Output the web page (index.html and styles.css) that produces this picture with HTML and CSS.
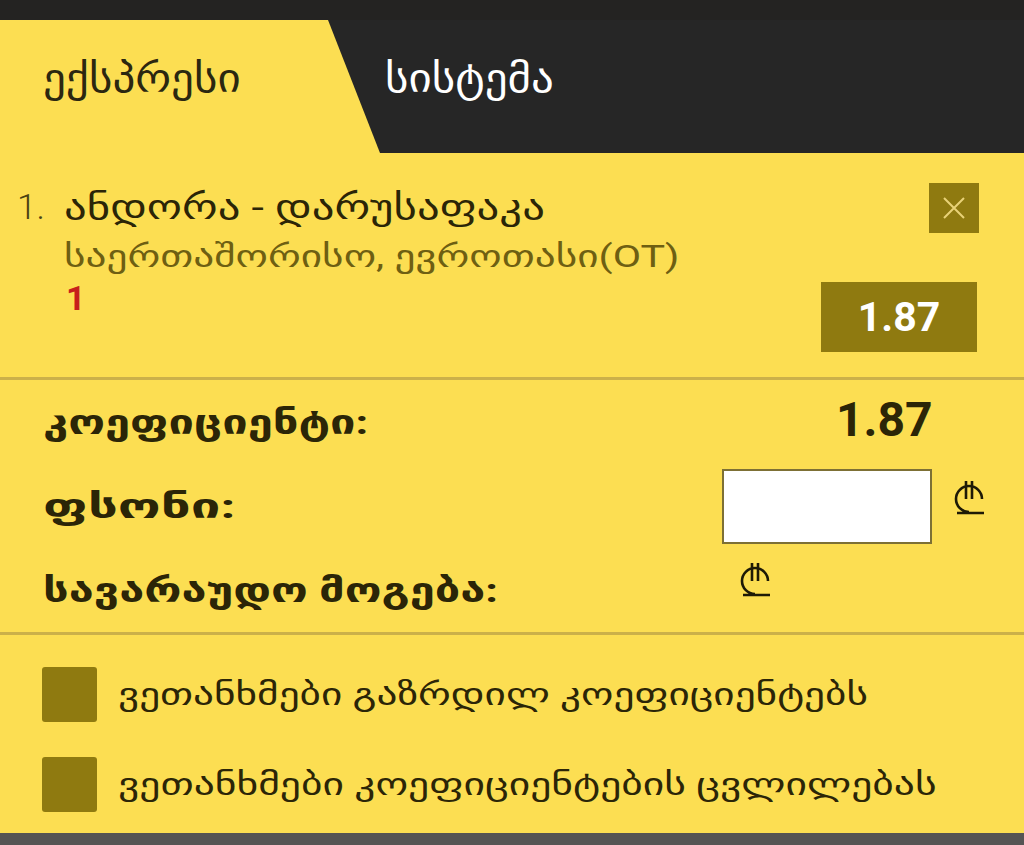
FILE: index.html
```html
<!DOCTYPE html>
<html lang="ka">
<head>
<meta charset="utf-8">
<link rel="stylesheet" href="styles.css">
</head>
<body>
<div class="topbar"></div>
<div class="tabs">
  <div class="tab tab-express"><span class="wide-tab">ექსპრესი</span></div>
  <div class="tab tab-system"><span class="wide-tab">სისტემა</span></div>
</div>
<div class="bet">
  <div class="bet-num">1.</div>
  <div class="bet-info">
    <div class="bet-title"><span class="wide-title">ანდორა - დარუსაფაკა</span></div>
    <div class="bet-league"><span class="wide">საერთაშორისო, ევროთასი(OT)</span></div>
    <div class="bet-pick">1</div>
  </div>
  <div class="bet-side">
    <button class="close-btn" aria-label="close">
      <svg width="24" height="24" viewBox="0 0 24 24"><path d="M2 2L22 22M22 2L2 22" stroke="#e9d277" stroke-width="2" fill="none"/></svg>
    </button>
    <div class="odd-box">1.87</div>
  </div>
</div>
<div class="summary">
  <div class="row">
    <div class="label"><span class="wide">კოეფიციენტი:</span></div>
    <div class="right right-value">1.87</div>
  </div>
  <div class="row">
    <div class="label"><span class="wide wide-stake">ფსონი:</span></div>
    <div class="right right-stake">
      <input class="stake" type="text">
      <svg class="lari" width="32" height="36" viewBox="0 0 32 36"><path d="M28 20A13 13 0 1 0 15 33M3 34H30M12 2V20M18 2V20" stroke="#1e1a06" stroke-width="2.6" fill="none"/></svg>
    </div>
  </div>
  <div class="row">
    <div class="label"><span class="wide">სავარაუდო მოგება:</span></div>
    <div class="right right-win">
      <svg class="lari" width="32" height="36" viewBox="0 0 32 36"><path d="M28 20A13 13 0 1 0 15 33M3 34H30M12 2V20M18 2V20" stroke="#1e1a06" stroke-width="2.6" fill="none"/></svg>
    </div>
  </div>
</div>
<div class="agree">
  <label class="check"><span class="box"></span><span class="check-text"><span class="wide">ვეთანხმები გაზრდილ კოეფიციენტებს</span></span></label>
  <label class="check"><span class="box"></span><span class="check-text"><span class="wide wide-check2">ვეთანხმები კოეფიციენტების ცვლილებას</span></span></label>
</div>
<div class="bottombar"></div>
</body>
</html>
```
FILE: styles.css
```css
html, body {
  margin: 0;
  padding: 0;
}
body {
  width: 1024px;
  height: 845px;
  overflow: hidden;
  background: #fcde52;
  font-family: Roboto, "DejaVu Sans", sans-serif;
  color: #2b2507;
}
.wide, .wide-title, .wide-tab {
  display: inline-block;
  white-space: nowrap;
  transform-origin: 0 50%;
  transform: scaleX(1.33);
}
.wide-title {
  transform: scaleX(1.28);
}
.wide-tab {
  transform: scaleX(1.25);
}
.wide-stake {
  transform: scaleX(1.55);
}
.wide-check2 {
  transform: scaleX(1.34);
}
.topbar {
  height: 20px;
  background: #242322;
}
.tabs {
  display: flex;
  height: 133px;
}
.tab {
  display: flex;
  align-items: center;
  padding-bottom: 18px;
  box-sizing: border-box;
  font-family: "DejaVu Sans Condensed", "DejaVu Sans", sans-serif;
  font-size: 40px;
}
.tab-express {
  width: 328px;
  padding-left: 43px;
  color: #2b2710;
}
.tab-system {
  flex: 1;
  background: #262626;
  color: #ffffff;
  padding-left: 57px;
  clip-path: polygon(0 0, 100% 0, 100% 100%, 52px 100%);
}
.bet {
  display: flex;
  padding: 31px 47px 0 18px;
  border-bottom: 3px solid #cbb049;
  height: 227px;
  box-sizing: border-box;
}
.bet-num {
  font-size: 35px;
  font-weight: 300;
  color: #4a4213;
  width: 47px;
  line-height: 48px;
  margin-left: -1px;
}
.bet-info {
  flex: 1;
}
.bet-title {
  font-size: 35px;
  line-height: 48px;
  color: #2b2507;
}
.bet-league {
  font-size: 31px;
  line-height: 50px;
  color: #6e5f12;
}
.bet-pick {
  font-size: 34px;
  font-weight: 700;
  color: #c6201b;
  line-height: 32px;
  padding-left: 2px;
}
.bet-side {
  display: flex;
  flex-direction: column;
  align-items: flex-end;
  gap: 49px;
  margin-top: -1px;
}
.close-btn {
  width: 50px;
  height: 50px;
  margin-right: -2px;
  border: none;
  padding: 0;
  background: #8f7a10;
  display: flex;
  align-items: center;
  justify-content: center;
}
.odd-box {
  width: 156px;
  height: 70px;
  background: #8f7a10;
  color: #ffffff;
  font-size: 41px;
  font-weight: 700;
  display: flex;
  align-items: center;
  justify-content: center;
}
.summary {
  padding: 0 36px 0 43px;
  border-bottom: 3px solid #cbb049;
  height: 255px;
  box-sizing: border-box;
}
.row {
  display: flex;
  align-items: center;
  justify-content: space-between;
  height: 84px;
}
.label {
  font-size: 34px;
  font-weight: 700;
  color: #2b2507;
}
.right {
  width: 266px;
  display: flex;
}
.right-value {
  font-size: 48px;
  font-weight: 700;
  color: #2b2507;
  padding-left: 114px;
  box-sizing: border-box;
  margin-top: -6px;
}
.right-stake {
  align-items: flex-start;
  gap: 22px;
}
.stake {
  width: 210px;
  height: 75px;
  box-sizing: border-box;
  border: 2px solid #7d7035;
  background: #ffffff;
  margin: 0;
}
.right-stake .lari {
  margin-top: 10px;
}
.right-win {
  padding-left: 18px;
  box-sizing: border-box;
  margin-top: -22px;
}
.agree {
  padding: 32px 20px 0 42px;
  height: 198px;
  box-sizing: border-box;
}
.check {
  display: flex;
  align-items: center;
  gap: 21px;
  height: 55px;
  margin-bottom: 35px;
}
.box {
  width: 55px;
  height: 55px;
  background: #8f7a10;
  border-radius: 3px;
  flex: none;
}
.check-text {
  font-size: 31px;
  color: #2b2507;
}
.bottombar {
  height: 12px;
  background: #555453;
}
```
